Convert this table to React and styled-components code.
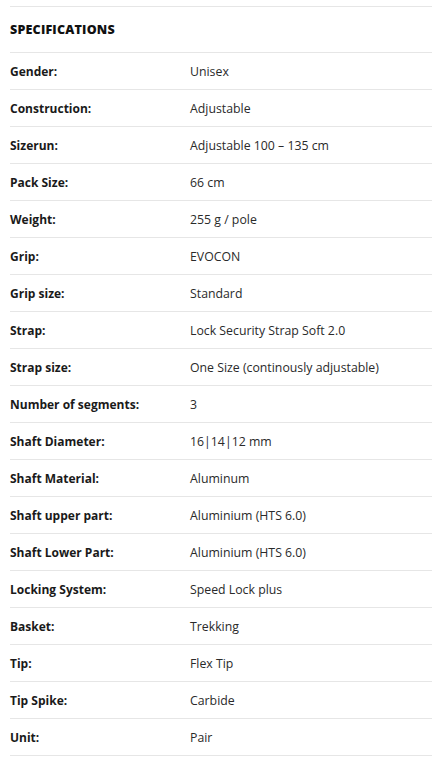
import styled, { createGlobalStyle } from "styled-components"

const GlobalStyle = createGlobalStyle`
  body {
    margin: 0;
    background: #fff;
    font-family: "Open Sans", "Liberation Sans", sans-serif;
    color: #1e1e1e;
  }
`

const Container = styled.div`
  width: 432px;
  padding: 6px 0 0 10px;
  box-sizing: border-box;
  overflow: hidden;
`

const Title = styled.h2`
  margin: 0;
  height: 45px;
  display: flex;
  align-items: center;
  font-size: 12.5px;
  font-weight: 800;
  letter-spacing: 0.2px;
  color: #111;
  border-top: 1px solid #e6e6e6;
  border-bottom: 1px solid #e6e6e6;
`

const Row = styled.div`
  height: 36px;
  padding-top: 1px;
  box-sizing: border-box;
  height: 37px;
  display: grid;
  grid-template-columns: 180px 1fr;
  align-items: center;
  border-bottom: 1px solid #e6e6e6;
  font-size: 12px;
`

const Label = styled.span`
  font-weight: 700;
  color: #1a1a1a;
`

const Value = styled.span`
  font-size: 12.3px;
  color: #2a2a2a;
`

const specs = [
  ["Gender:", "Unisex"],
  ["Construction:", "Adjustable"],
  ["Sizerun:", "Adjustable 100 – 135 cm"],
  ["Pack Size:", "66 cm"],
  ["Weight:", "255 g / pole"],
  ["Grip:", "EVOCON"],
  ["Grip size:", "Standard"],
  ["Strap:", "Lock Security Strap Soft 2.0"],
  ["Strap size:", "One Size (continously adjustable)"],
  ["Number of segments:", "3"],
  ["Shaft Diameter:", "16|14|12 mm"],
  ["Shaft Material:", "Aluminum"],
  ["Shaft upper part:", "Aluminium (HTS 6.0)"],
  ["Shaft Lower Part:", "Aluminium (HTS 6.0)"],
  ["Locking System:", "Speed Lock plus"],
  ["Basket:", "Trekking"],
  ["Tip:", "Flex Tip"],
  ["Tip Spike:", "Carbide"],
  ["Unit:", "Pair"],
]

const App = () => {
  return (
    <>
      <GlobalStyle />
      <Container>
        <Title>SPECIFICATIONS</Title>
        {specs.map(([label, value]) => (
          <Row key={label}>
            <Label>{label}</Label>
            <Value>{value}</Value>
          </Row>
        ))}
      </Container>
    </>
  )
}

export default App
